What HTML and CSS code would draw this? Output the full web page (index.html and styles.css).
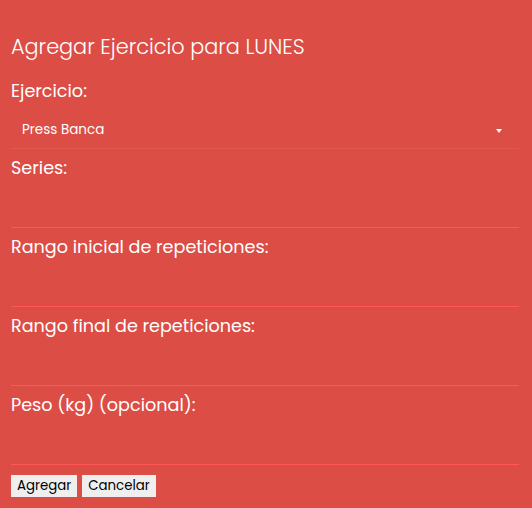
FILE: index.html
```html
<!DOCTYPE html>
<html lang="es">
<head>
<meta charset="utf-8">
<title>Agregar Ejercicio</title>
<link rel="stylesheet" href="styles.css">
</head>
<body>
<form class="form">
  <h2 class="title">Agregar Ejercicio para LUNES</h2>
  <label class="label label-first">Ejercicio:</label>
  <div class="select">
    <span class="select-value">Press Banca</span>
    <span class="caret"></span>
  </div>
  <label class="label">Series:</label>
  <div class="field"></div>
  <label class="label">Rango inicial de repeticiones:</label>
  <div class="field"></div>
  <label class="label">Rango final de repeticiones:</label>
  <div class="field"></div>
  <label class="label">Peso (kg) (opcional):</label>
  <div class="field"></div>
  <div class="actions">
    <button type="button" class="btn">Agregar</button>
    <button type="button" class="btn">Cancelar</button>
  </div>
</form>
</body>
</html>
```
FILE: styles.css
```css
html, body {
  margin: 0;
  padding: 0;
  background: #db4d45;
  height: 100%;
}
body {
  font-family: "Poppins", "Open Sans", "DejaVu Sans", sans-serif;
  color: #ffffff;
}
.form {
  display: flex;
  flex-direction: column;
  padding: 32px 13px 0 11px;
}
.title {
  margin: 0;
  font-size: 20.8px;
  font-weight: 300;
  line-height: 30px;
  height: 48px;
}
.label {
  display: block;
  font-size: 17.6px;
  line-height: 22px;
  height: 22px;
  margin-top: 8px;
}
.label-first {
  margin-top: 0;
}
.select {
  position: relative;
  box-sizing: border-box;
  height: 47px;
  padding: 19px 0 0 11px;
  border-bottom: 1px solid rgba(255, 255, 255, 0.07);
}
.select-value {
  display: block;
  font-size: 13.5px;
  line-height: 18px;
}
.caret {
  position: absolute;
  right: 17px;
  top: 27px;
  width: 0;
  height: 0;
  border-left: 3.5px solid transparent;
  border-right: 3.5px solid transparent;
  border-top: 4px solid #ffffff;
}
.field {
  height: 48px;
  border-bottom: 1px solid #ff5656;
}
.actions {
  display: flex;
  gap: 5px;
  margin-top: 10px;
}
.btn {
  font-family: inherit;
  font-size: 13.333px;
  background: #efefef;
  color: #000;
  border: none;
  height: 22px;
  padding: 0 6px;
}
```
